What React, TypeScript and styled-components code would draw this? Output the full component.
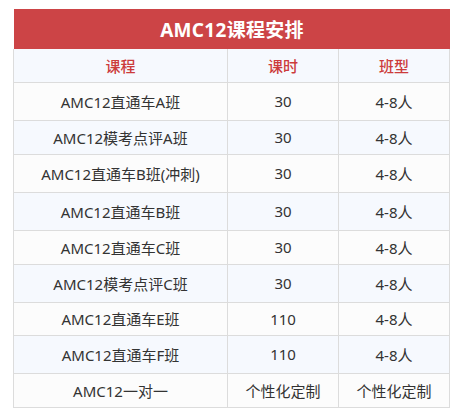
import React from 'react';
import styled, { createGlobalStyle } from 'styled-components';

const GlobalStyle = createGlobalStyle`
  body {
    margin: 0;
    background: #ffffff;
    font-family: "Noto Sans", "Noto Sans CJK SC", sans-serif;
  }
`;

const Page = styled.div`
  padding: 9px 13px 0 13px;
  width: 437px;
`;

const Title = styled.div`
  height: 40px;
  margin-left: 1px;
  background-color: #cc4446;
  color: #ffffff;
  font-size: 19px;
  font-weight: bold;
  display: flex;
  align-items: center;
  justify-content: center;
  letter-spacing: 0.3px;
`;

const Table = styled.table`
  width: 437px;
  border-collapse: collapse;
  table-layout: fixed;
  border-left: 1px solid #dcdcdc;
  border-right: 1px solid #dcdcdc;
`;

const Row = styled.tr<{ $striped: boolean; $h: number }>`
  height: ${p => p.$h}px;
  background-color: ${p => (p.$striped ? '#f6f9fe' : '#fcfcfc')};
`;

const HeadCell = styled.th`
  padding: 0;
  border: 1px solid #dcdcdc;
  border-top: none;
  color: #cc3b3b;
  font-size: 15px;
  font-weight: 500;
  text-align: center;
`;

const Cell = styled.td`
  padding: 0;
  border: 1px solid #dcdcdc;
  color: #333333;
  font-size: 15px;
  text-align: center;
`;

const rows = [
  { name: 'AMC12直通车A班', hours: '30', size: '4-8人', h: 38 },
  { name: 'AMC12模考点评A班', hours: '30', size: '4-8人', h: 34 },
  { name: 'AMC12直通车B班(冲刺)', hours: '30', size: '4-8人', h: 38 },
  { name: 'AMC12直通车B班', hours: '30', size: '4-8人', h: 38 },
  { name: 'AMC12直通车C班', hours: '30', size: '4-8人', h: 34 },
  { name: 'AMC12模考点评C班', hours: '30', size: '4-8人', h: 38 },
  { name: 'AMC12直通车E班', hours: '110', size: '4-8人', h: 33 },
  { name: 'AMC12直通车F班', hours: '110', size: '4-8人', h: 38 },
  { name: 'AMC12一对一', hours: '个性化定制', size: '个性化定制', h: 34 },
];

const App: React.FC = () => {
  return (
    <>
      <GlobalStyle />
      <Page>
        <Title>AMC12课程安排</Title>
        <Table>
          <colgroup>
            <col style={{ width: 214 }} />
            <col style={{ width: 111 }} />
            <col style={{ width: 111 }} />
          </colgroup>
          <thead>
            <Row $striped $h={33}>
              <HeadCell>课程</HeadCell>
              <HeadCell>课时</HeadCell>
              <HeadCell>班型</HeadCell>
            </Row>
          </thead>
          <tbody>
            {rows.map((r, i) => (
              <Row key={r.name} $striped={i % 2 === 1} $h={r.h}>
                <Cell>{r.name}</Cell>
                <Cell>{r.hours}</Cell>
                <Cell>{r.size}</Cell>
              </Row>
            ))}
          </tbody>
        </Table>
      </Page>
    </>
  );
};

export default App;
